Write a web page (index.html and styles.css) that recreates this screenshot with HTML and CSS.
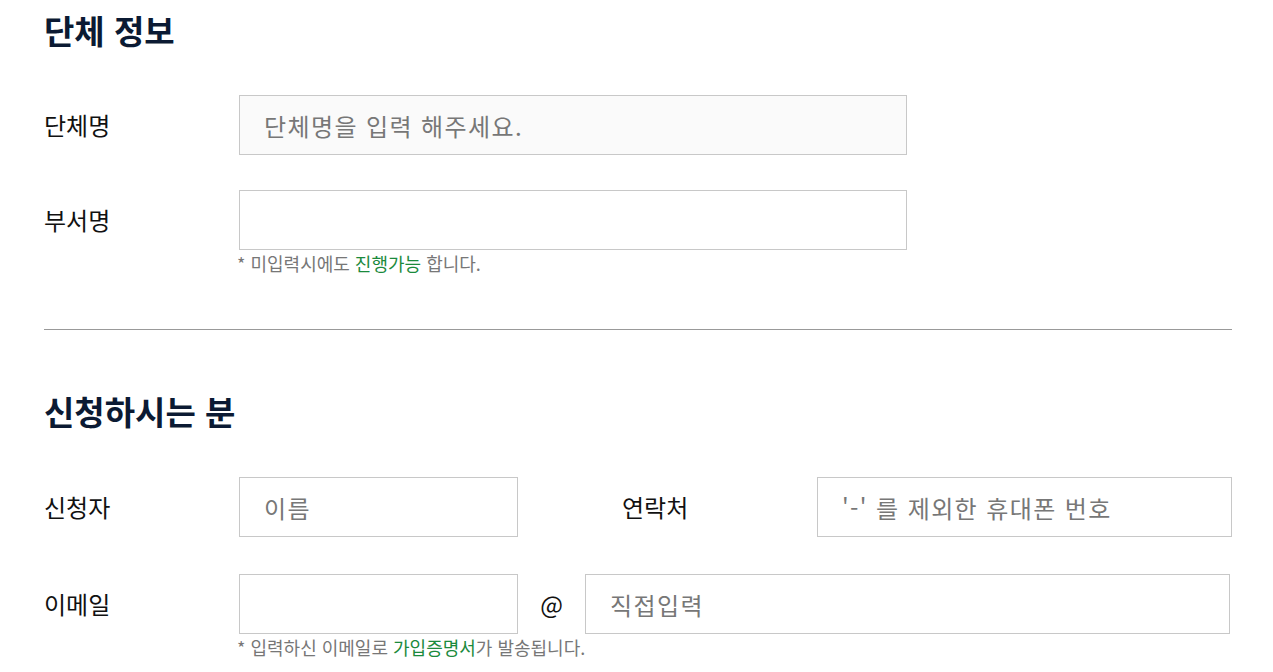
FILE: index.html
```html
<!DOCTYPE html>
<html lang="ko">
<head>
    <meta charset="UTF-8">
    <meta name="viewport" content="width=device-width, initial-scale=1.0">
    <title>단체 가입 신청</title>
    <link rel="stylesheet" href="styles.css">
</head>
<body>
    <form class="join-form">
        <section class="form-section org-section">
            <h2 class="section-title">단체 정보</h2>

            <div class="form-row">
                <label class="field-label" for="orgName">단체명</label>
                <div class="field-body">
                    <input class="text-input input-filled" id="orgName" type="text" placeholder="단체명을 입력 해주세요.">
                </div>
            </div>

            <div class="form-row">
                <label class="field-label" for="deptName">부서명</label>
                <div class="field-body">
                    <input class="text-input" id="deptName" type="text">
                    <p class="help-text">* 미입력시에도 <span class="accent">진행가능</span> 합니다.</p>
                </div>
            </div>
        </section>

        <hr class="divider">

        <section class="form-section applicant-section">
            <h2 class="section-title">신청하시는 분</h2>

            <div class="form-row">
                <label class="field-label" for="applicant">신청자</label>
                <div class="field-body inline">
                    <input class="text-input short" id="applicant" type="text" placeholder="이름">
                    <label class="field-label sub-label" for="phone">연락처</label>
                    <input class="text-input grow" id="phone" type="text" placeholder="'-' 를 제외한 휴대폰 번호">
                </div>
            </div>

            <div class="form-row">
                <label class="field-label" for="emailId">이메일</label>
                <div class="field-body">
                    <div class="inline">
                        <input class="text-input short" id="emailId" type="text">
                        <span class="at-mark">@</span>
                        <input class="text-input grow email-domain" type="text" placeholder="직접입력">
                    </div>
                    <p class="help-text">* 입력하신 이메일로 <span class="accent">가입증명서</span>가 발송됩니다.</p>
                </div>
            </div>
        </section>
    </form>
</body>
</html>
```

FILE: styles.css
```css
body {
    margin: 0;
    padding: 0 41px 0 44px;
    font-family: "Noto Sans CJK KR", "Noto Sans", sans-serif;
    color: #111;
    background-color: #fff;
}

.join-form {
    width: 100%;
}

.section-title {
    margin: 0;
    padding-top: 10px;
    font-size: 33px;
    font-weight: 700;
    line-height: 40px;
    color: #0b1a33; /* dark navy heading */
}

.applicant-section .section-title {
    padding-top: 61px;
}

.form-row {
    display: flex;
    align-items: flex-start;
    margin-top: 35px;
}

.org-section .section-title + .form-row {
    margin-top: 45px;
}

.applicant-section .section-title + .form-row {
    margin-top: 46px;
}

.applicant-section .form-row + .form-row {
    margin-top: 37px;
}

.field-label {
    flex: 0 0 195px;
    font-size: 24px;
    line-height: 60px;
    height: 60px;
}

.field-body {
    flex: 1;
}

.inline {
    display: flex;
    align-items: flex-start;
}

.text-input {
    box-sizing: border-box;
    width: 668px;
    height: 60px;
    padding: 0 24px;
    border: 1px solid #c8c8c8;
    border-radius: 0;
    background-color: #fff;
    font-family: inherit;
    font-size: 24px;
    letter-spacing: 1.4px;
    color: #333;
    outline: none;
}

.text-input::placeholder {
    color: #777;
}

.input-filled {
    background-color: #fafafa;
}

.text-input.short {
    width: 279px;
}

.text-input.grow {
    width: auto;
    flex: 1;
    min-width: 0;
}

.sub-label {
    flex: 0 0 195px;
    padding-left: 104px;
}

.at-mark {
    flex: 0 0 67px;
    text-align: center;
    font-size: 24px;
    line-height: 60px;
}

.email-domain {
    margin-right: 2px;
}

.help-text {
    margin: 1px 0 0 -2px;
    font-size: 18px;
    line-height: 24px;
    color: #777;
}

.accent {
    color: #1b8a3c; /* green highlight */
}

.divider {
    margin: 54px 0 0;
    border: none;
    border-top: 1px solid #999;
}
```
